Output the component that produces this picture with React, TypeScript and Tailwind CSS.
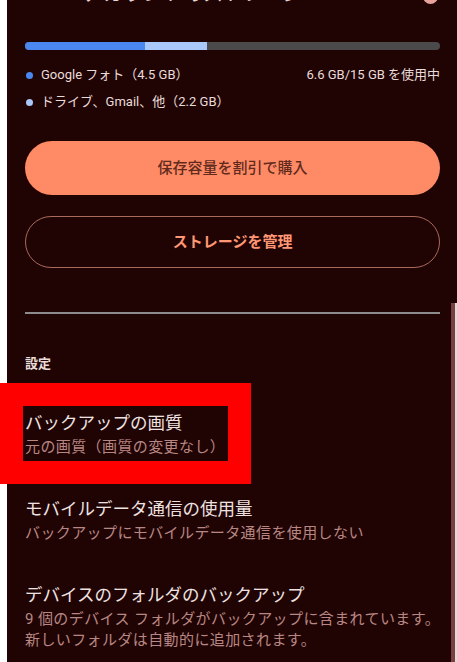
const items = [
  { title: 'バックアップの画質', lines: ['元の画質（画質の変更なし）'] },
  { title: 'モバイルデータ通信の使用量', lines: ['バックアップにモバイルデータ通信を使用しない'] },
  {
    title: 'デバイスのフォルダのバックアップ',
    lines: ['9 個のデバイス フォルダがバックアップに含まれています。', '新しいフォルダは自動的に追加されます。'],
  },
];

export default function App() {
  return (
    <div
      className="relative flex w-[457px] h-[662px] overflow-hidden bg-white"
      style={{ fontFamily: 'Roboto, "Noto Sans CJK JP", sans-serif' }}
    >
      {/* left edge strip */}
      <div className="w-[7px] shrink-0 bg-white" />

      {/* Panel */}
      <div className="flex-1 bg-[#200404] px-[18px]">
        {/* Header (scrolled, only bottom visible) */}
        <div className="-mt-[18px] flex h-[22px] items-end justify-between">
          <div className="flex items-end gap-[30px] text-[20px] leading-none text-[#e6d6d4]">
            <span className="ml-[8px]">←</span>
            <span>アカウントのストレージ</span>
          </div>
          <div className="mr-[2px] h-[16px] w-[15px] rounded-full bg-[#e7a29c]" />
        </div>

        {/* Usage bar */}
        <div className="mt-[38px] flex h-[8px] w-full overflow-hidden rounded-full bg-[#4a4a4a]">
          <div className="w-[120px] bg-[#4a87f0]" />
          <div className="w-[62px] bg-[#a9c7f8]" />
        </div>

        {/* Legend */}
        <div className="mt-[15px] flex items-center justify-between text-[13px] leading-[20px] text-[#e9dcda]">
          <div className="flex items-center gap-[8px]">
            <span className="ml-[1px] h-[7px] w-[7px] rounded-full bg-[#4a87f0]" />
            <span>Google フォト（4.5 GB）</span>
          </div>
          <span>6.6 GB/15 GB を使用中</span>
        </div>
        <div className="mt-[7px] flex items-center gap-[8px] text-[13px] leading-[20px] text-[#e9dcda]">
          <span className="ml-[1px] h-[7px] w-[7px] rounded-full bg-[#a9c7f8]" />
          <span>ドライブ、Gmail、他（2.2 GB）</span>
        </div>

        {/* Buttons */}
        <button className="mt-[29px] flex h-[54px] w-full items-center justify-center rounded-full bg-[#ff8b66] text-[15px] font-medium text-[#622a1c]">
          保存容量を割引で購入
        </button>
        <button className="mt-[21px] flex h-[52px] w-full items-center justify-center rounded-full border border-[#a9695b] text-[15px] font-bold text-[#ff9674]">
          ストレージを管理
        </button>

        {/* Divider */}
        <div className="mt-[44px] h-[2px] w-full bg-[#8c8c8c]" />

        {/* Settings */}
        <div className="mt-[41px] text-[13px] font-bold leading-[18px] text-[#e9dcda]">設定</div>

        <div className="mt-[38px] flex flex-col gap-[39px]">
          {items.map((item) => (
            <div key={item.title}>
              <div className="text-[17.5px] leading-[24px] text-[#ede2e0]">{item.title}</div>
              <div className="mt-[2px] whitespace-nowrap text-[15px] leading-[21px] tracking-[0.4px] text-[#b98783]">
                {item.lines.map((l) => (
                  <div key={l}>{l}</div>
                ))}
              </div>
            </div>
          ))}
        </div>
      </div>

      {/* Scrollbar */}
      <div className="absolute right-[2px] top-[303px] bottom-0 w-[4px] bg-[#7a4040]" />
      <div className="absolute right-0 top-[303px] bottom-0 w-[2px] bg-[#dcdcdc]" />

      {/* Highlight annotation */}
      <div className="absolute left-0 top-[383px] h-[101px] w-[251px] border-[23px] border-[#ff0000]" />
    </div>
  );
}
